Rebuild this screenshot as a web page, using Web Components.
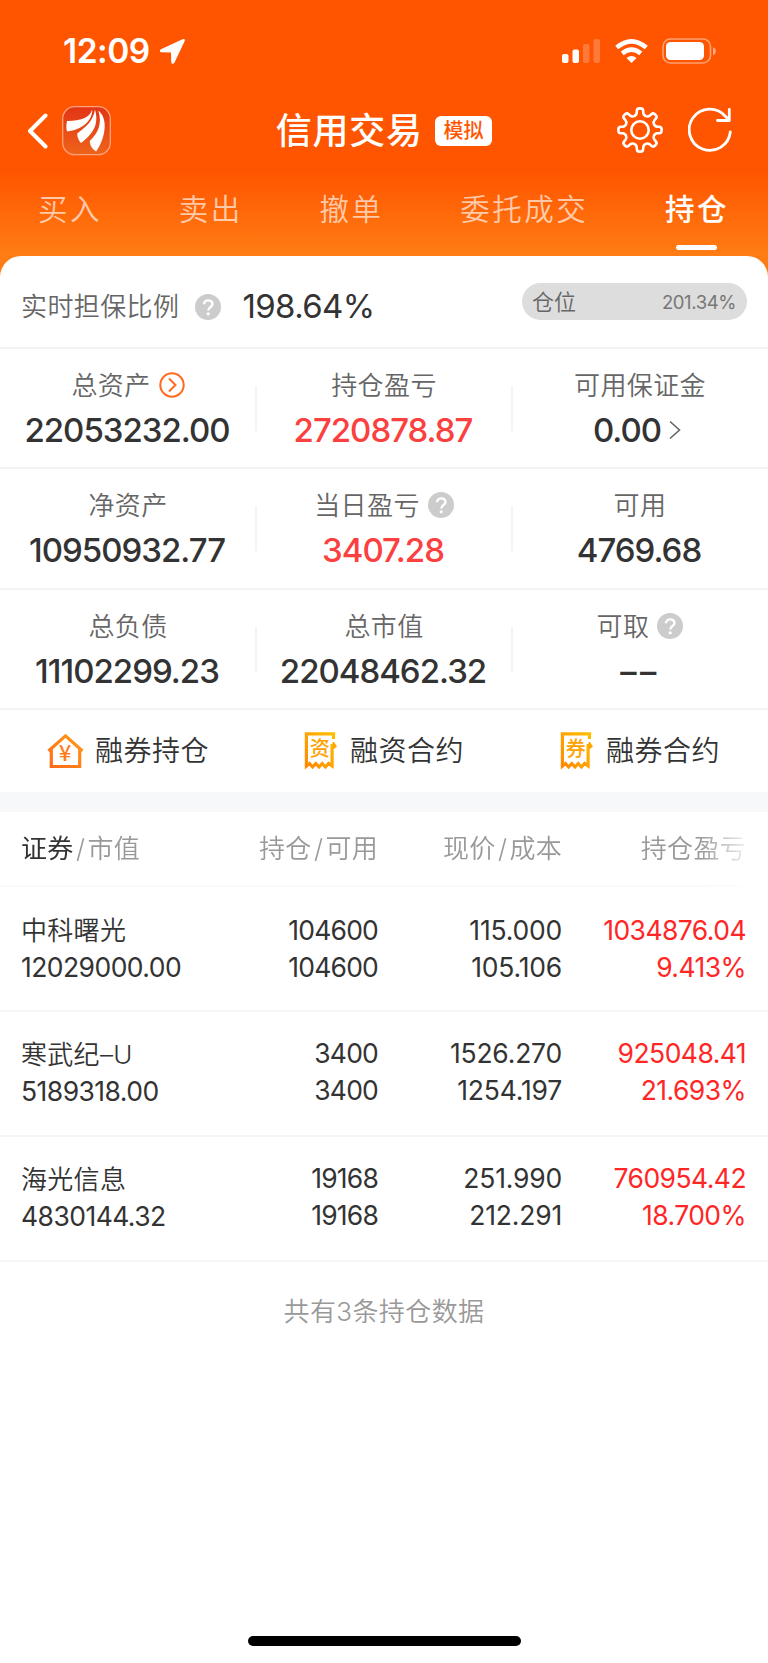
<!DOCTYPE html>
<html lang="zh-CN">
<head>
<meta charset="UTF-8">
<meta name="viewport" content="width=device-width, initial-scale=1.0">
<title>信用交易</title>
<style>
  body {
    margin: 0;
    background: #fff;
    color: #333;
    font-family: Inter, "Noto Sans CJK SC", sans-serif;
    font-weight: 350;
  }
</style>
</head>
<body>
<trade-app></trade-app>

<script>
const define = (name, html, setup) => {
  const template = document.createElement('template');
  template.innerHTML = html;
  customElements.define(name, class extends HTMLElement {
    constructor() {
      super();
      this.attachShadow({ mode: 'open' }).appendChild(template.content.cloneNode(true));
    }
    connectedCallback() {
      if (setup) setup(this, this.shadowRoot);
    }
  });
};

define('status-bar', `
  <style>
    :host { display: flex; align-items: center; height: 102px; padding: 0 51px 0 63px; box-sizing: border-box; color: #fff; }
    .time { font-size: 33.500px; font-weight: 600; letter-spacing: -.5px; line-height: 40px; }
    .arrow { margin-left: 9px; }
    .signal { margin-left: auto; }
    .wifi { margin-left: 14px; }
    .battery { margin-left: 14px; }
  </style>
  <span class="time">12:09</span>
  <svg class="arrow" width="27" height="27" viewBox="0 0 27 27" fill="#fff"><path d="M23.500 1.200 2 11.200c-1.800.9-1.400 3 .6 3.100l9.400.2.2 9.600c.1 2 2.300 2.400 3.200.6L25.700 3c.7-1.500-.4-2.500-2.200-1.800z"/></svg>
  <svg class="signal" width="39" height="25" viewBox="0 0 39 25" fill="#fff">
    <rect x="0" y="15" width="6.500" height="9" rx="2"/>
    <rect x="10.500" y="10.500" width="6.500" height="13.500" rx="2"/>
    <rect x="21" y="5" width="6.500" height="19" rx="2" opacity=".22"/>
    <rect x="31.500" y="0" width="6.500" height="24" rx="2" opacity=".22"/>
  </svg>
  <svg class="wifi" width="33" height="25" viewBox="0 0 33 25" fill="none" stroke="#fff" stroke-width="4.600">
    <path d="M1.700 8.600Q16.500-3.800 31.300 8.600"/>
    <path d="M7.200 14.400Q16.500 6.800 25.800 14.400"/>
    <path d="M16.500 24 11.500 19Q16.500 15 21.500 19Z" fill="#fff" stroke="none"/>
  </svg>
  <svg class="battery" width="55" height="26" viewBox="0 0 55 26">
    <rect x="1" y="1" width="47.500" height="24" rx="7.500" fill="none" stroke="#fff" stroke-width="1.600" opacity=".45"/>
    <rect x="4" y="4" width="38" height="18" rx="4.500" fill="#fff"/>
    <path d="M51 9.200c3.800 1.300 3.800 6.800 0 8z" fill="#fff" opacity=".5"/>
  </svg>
`);

define('gear-icon', `
  <style>:host { display: block; width: 46px; height: 46px; } svg { display: block; }</style>
  <svg width="46" height="46" viewBox="-23 -23 46 46" fill="none" stroke="#fff" stroke-width="2.600" stroke-linejoin="round">
    <path></path><circle r="8.700"/>
  </svg>
`, (host, root) => {
  // eight teeth, every corner rounded with a quadratic curve
  const points = [];
  for (let i = 0; i < 8; i++) {
    [[-13, 15.3], [-8, 21.8], [8, 21.8], [13, 15.3]].forEach(([offset, radius]) => {
      const angle = (i * 45 + offset) * Math.PI / 180;
      points.push([Math.cos(angle) * radius, Math.sin(angle) * radius]);
    });
  }
  const toward = (from, to, dist) => {
    const len = Math.hypot(to[0] - from[0], to[1] - from[1]);
    const t = Math.min(dist / len, 0.5);
    return [from[0] + (to[0] - from[0]) * t, from[1] + (to[1] - from[1]) * t].map(v => v.toFixed(2));
  };
  const d = points.map((point, i) => {
    const before = toward(point, points[(i + points.length - 1) % points.length], 2.4);
    const after = toward(point, points[(i + 1) % points.length], 2.4);
    return `${i ? 'L' : 'M'}${before}Q${point.map(v => v.toFixed(2))} ${after}`;
  });
  root.querySelector('path').setAttribute('d', d.join('') + 'Z');
});

define('nav-bar', `
  <style>
    :host { display: grid; grid-template-columns: 1fr auto 1fr; align-items: center; height: 57px; padding: 0 36px 0 27px; color: #fff; }
    .left, .right, .middle { display: flex; align-items: center; }
    .logo { margin-left: 14px; }
    .middle { gap: 12px; margin-left: 9px; }
    h1 { margin: 0; font-size: 36px; font-weight: 500; letter-spacing: .7px; line-height: 50px; }
    .badge { width: 57.500px; height: 30px; border-radius: 6px; background: #fff; color: #f50; font-size: 20px; font-weight: 500; line-height: 30px; text-align: center; }
    .right { justify-content: flex-end; gap: 25px; margin-top: -1px; }
    svg { display: block; }
  </style>
  <div class="left">
    <svg width="21" height="36" viewBox="0 0 21 36" fill="none" stroke="#fff" stroke-width="4" stroke-linecap="round" stroke-linejoin="round"><path d="M18.500 2.500 3 18l15.500 15.500"/></svg>
    <svg class="logo" width="49" height="50" viewBox="0 0 49 50">
      <defs><linearGradient id="g" x2="0" y2="1"><stop stop-color="#e33415"/><stop offset="1" stop-color="#ee641a"/></linearGradient></defs>
      <rect x=".7" y=".7" width="47.600" height="48" rx="12" fill="url(#g)" stroke="#ffa37a" stroke-width="1.300"/>
      <path fill="#fff" d="M30.200 3.600C30.700 14 21 24 5 25.500 4 22 4.200 18.500 5 15 17 15.200 27.500 12.500 30.200 3.600zM33 3.600c-.8 3.500-1.500 7-4.500 11.500-3 4.300-7.500 8-13.300 12.500 0 4 1.500 7 3.800 9.500C28 30 38 21 33 3.600zM36.300 4.500c4 13 .3 22-8.500 30.500 0 4.500 2.500 8 6.400 10.500C43 33 47 13 36.300 4.500z"/>
    </svg>
  </div>
  <div class="middle"><h1>信用交易</h1><span class="badge">模拟</span></div>
  <div class="right">
    <gear-icon></gear-icon>
    <svg width="44" height="46" viewBox="0 0 44 46" fill="none" stroke="#fff" stroke-width="2.800" stroke-linecap="round" stroke-linejoin="round"><path d="M42.300 25A20.600 20.600 0 1 1 37.600 9.500L41.300 13.300M41.300 2.500V13.500H29.500"/></svg>
  </div>
`);

define('nav-tab', `
  <style>
    :host { display: flex; flex-direction: column; align-items: center; height: 91px; box-sizing: border-box; padding-top: 28px; font-size: 29.500px; letter-spacing: 2.500px; line-height: 44px; color: rgba(255, 255, 255, .66); }
    i { width: 41px; height: 5px; margin: 14px 1px 0 0; border-radius: 3px; }
    :host([active]) { color: #fff; font-weight: 500; }
    :host([active]) i { background: #fff; }
  </style>
  <slot></slot><i></i>
`);

define('nav-tabs', `
  <style>:host { display: flex; justify-content: space-between; height: 97px; padding: 0 39px 0 38px; }</style>
  <slot></slot>
`);

define('help-icon', `
  <style>:host { display: block; width: 26px; height: 26px; border-radius: 50%; background: #ccc; } svg { display: block; }</style>
  <svg width="26" height="26" viewBox="0 0 26 26" fill="none" stroke="#fff" stroke-width="2.400"><path d="M9 10.300c0-5.200 8.500-5.200 8.500-.3 0 3-4.200 3-4.200 6.600"/><circle cx="13.200" cy="19.800" r="1.600" fill="#fff" stroke="none"/></svg>
`);

define('ratio-row', `
  <style>
    :host { display: flex; align-items: center; height: 93px; padding: 0 21px; box-sizing: border-box; border-bottom: 2px solid #f2f3f5; }
    .label { margin-top: 11px; font-size: 26px; letter-spacing: .4px; color: #666; line-height: 36px; }
    help-icon { margin: 10px 0 0 16px; }
    .value { margin: 9px 0 0 21px; font-size: 33px; font-weight: 400; letter-spacing: -.6px; line-height: 40px; }
    .pill { display: flex; align-items: center; justify-content: space-between; width: 225px; height: 37px; margin: 0 0 0 auto; padding: 0 11px 0 10px; box-sizing: border-box; border-radius: 19px; background: #ddd; color: #666; font-size: 22px; line-height: 30px; }
    .pill b { font-size: 18.500px; font-weight: 400; letter-spacing: -.4px; color: #777; }
  </style>
  <span class="label">实时担保比例</span>
  <help-icon></help-icon>
  <span class="value">198.64%</span>
  <div class="pill"><span>仓位</span><b>201.34%</b></div>
`);

define('metric-cell', `
  <style>
    :host { position: relative; display: flex; flex-direction: column; align-items: center; height: 120.300px; box-sizing: border-box; padding-top: 19px; border-bottom: 2px solid #f2f3f5; }
    :host([divider])::after { content: ""; position: absolute; right: -1px; top: 37px; width: 2px; height: 45px; background: #f2f3f5; }
    .label { display: flex; align-items: center; gap: 8px; height: 36px; font-size: 26px; letter-spacing: .4px; line-height: 36px; color: #666; }
    .value { display: flex; align-items: center; gap: 8px; height: 44px; margin-top: 4px; padding-right: 2px; font-size: 33px; font-weight: 500; letter-spacing: -1px; line-height: 44px; color: #333; }
    :host([up]) .value { color: #fb4040; }
  </style>
  <div class="label"><slot name="label"></slot></div>
  <div class="value"><slot></slot></div>
`);

define('metric-grid', `
  <style>
    :host { display: grid; grid-template-columns: repeat(3, 1fr); }
    svg { display: block; }
    [slot="label"]:not(span) { margin-bottom: 2px; }
    .more { margin-right: 4px; }
    .empty { font-family: "Liberation Sans", sans-serif; font-size: 33px; font-weight: 700; letter-spacing: 1.500px; }
  </style>
  <metric-cell divider><span slot="label">总资产</span>
    <svg slot="label" width="26" height="26" viewBox="0 0 26 26" fill="none" stroke="#ff6a1f" stroke-width="2"><circle cx="13" cy="13" r="11.700"/><path d="m10 6.500 6.500 6.500-6.500 6.500"/></svg>22053232.00</metric-cell>
  <metric-cell divider up><span slot="label">持仓盈亏</span>2720878.87</metric-cell>
  <metric-cell><span slot="label">可用保证金</span>0.00<svg class="more" width="12" height="20" viewBox="0 0 12 20" fill="none" stroke="#666" stroke-width="1.600"><path d="m1 1.500 9.500 8.500L1 18.500"/></svg></metric-cell>
  <metric-cell divider><span slot="label">净资产</span>10950932.77</metric-cell>
  <metric-cell divider up><span slot="label">当日盈亏</span><help-icon slot="label"></help-icon>3407.28</metric-cell>
  <metric-cell><span slot="label">可用</span>4769.68</metric-cell>
  <metric-cell divider><span slot="label">总负债</span>11102299.23</metric-cell>
  <metric-cell divider><span slot="label">总市值</span>22048462.32</metric-cell>
  <metric-cell><span slot="label">可取</span><help-icon slot="label"></help-icon><span class="empty">––</span></metric-cell>
`);

define('receipt-icon', `
  <style>
    :host { display: block; width: 33px; height: 38px; }
    svg { display: block; overflow: visible; }
    text { font: 500 20px "Noto Sans CJK SC", sans-serif; }
  </style>
  <svg width="33" height="38" viewBox="0 0 33 38">
    <defs><linearGradient id="g" x1="0" y1="1" x2="1" y2="0"><stop stop-color="#ff8a00"/><stop offset="1" stop-color="#ffbe00"/></linearGradient></defs>
    <path fill="none" stroke="url(#g)" stroke-width="3.200" d="M29.500 7V1.800H2.400V34l3-2.500 3.200 3.500 3.200-3.500 3.200 3.500 3.200-3.500 3.200 3.500 3.200-3.500 3.500 2.500V12"/>
    <path fill="#ffa800" d="M28.500 10h1.500l3 4.500-3 2.500h-1.500z"/>
    <text x="16" y="24" text-anchor="middle" fill="#ffa200"></text>
  </svg>
`, (host, root) => {
  root.querySelector('text').textContent = host.getAttribute('char');
});

define('house-icon', `
  <style>
    :host { display: block; width: 37px; height: 38px; margin-right: -2px; }
    svg { display: block; }
    text { font: 500 22px "Noto Sans CJK SC", sans-serif; }
  </style>
  <svg width="37" height="38" viewBox="0 0 37 38">
    <defs><linearGradient id="g" x1="0" y1="1" x2="1" y2="0"><stop stop-color="#ff6a1a"/><stop offset="1" stop-color="#ff9c1a"/></linearGradient></defs>
    <path fill="none" stroke="url(#g)" stroke-width="3.200" d="M1.500 19 18.500 3.800 35.500 19M4.300 17.500V34.500H32.700V17.500"/>
    <text x="18.300" y="28.500" text-anchor="middle" fill="#ff7d1a">¥</text>
  </svg>
`);

define('shortcut-link', `
  <style>
    :host { display: flex; align-items: center; justify-content: center; gap: 13px; font-size: 28px; letter-spacing: .5px; line-height: 40px; color: #333; }
  </style>
  <slot name="icon"></slot><slot></slot>
`);

define('shortcut-bar', `
  <style>:host { display: grid; grid-template-columns: repeat(3, 1fr); height: 82px; border-bottom: 20px solid #f6f8fa; }</style>
  <shortcut-link><house-icon slot="icon"></house-icon>融券持仓</shortcut-link>
  <shortcut-link><receipt-icon slot="icon" char="资"></receipt-icon>融资合约</shortcut-link>
  <shortcut-link><receipt-icon slot="icon" char="券"></receipt-icon>融券合约</shortcut-link>
`);

define('position-head', `
  <style>
    :host { display: grid; grid-template-columns: 194px 163px 184px 184px; height: 75px; padding-left: 21px; box-sizing: border-box; border-bottom: 2px solid #f8f9fa; font-size: 26px; letter-spacing: .3px; line-height: 73px; color: #999; white-space: nowrap;
      -webkit-mask-image: linear-gradient(to right, #000 700px, transparent 755px); mask-image: linear-gradient(to right, #000 700px, transparent 755px); }
    span { text-align: right; }
    .first { text-align: left; }
    b { font-weight: 400; color: #333; }
    i { font-style: normal; padding: 0 2px 0 2.500px; }
  </style>
  <span class="first"><b>证券</b><i>/</i>市值</span>
  <span>持仓<i>/</i>可用</span>
  <span>现价<i>/</i>成本</span>
  <span>持仓盈亏</span>
`);

define('position-row', `
  <style>
    :host { display: grid; grid-template-columns: 194px 163px 184px 184px; height: 125px; padding: 25px 0 0 21px; box-sizing: border-box; border-bottom: 2px solid #f5f6f7; font-size: 26.500px; font-weight: 400; letter-spacing: -.55px; line-height: 37px; color: #333; }
    :host(:not(:first-of-type)) { padding-top: 24px; }
    :host(:not(:first-of-type)) div:not(.stock) { margin-top: -1px; }
    div { text-align: right; white-space: nowrap; }
    span { display: block; height: 37.300px; }
    .stock { text-align: left; }
    .name { font-size: 26px; font-weight: 350; letter-spacing: .3px; }
    .amount { letter-spacing: -.8px; }
    .price { letter-spacing: -.2px; }
    .up { color: #ff2626; }
  </style>
  <div class="stock"><span class="name" data-key="name"></span><span data-key="value"></span></div>
  <div class="amount"><span data-key="held"></span><span data-key="available"></span></div>
  <div class="price"><span data-key="price"></span><span data-key="cost"></span></div>
  <div class="up"><span data-key="profit"></span><span data-key="rate"></span></div>
`, (host, root) => {
  root.querySelectorAll('[data-key]').forEach(cell => {
    cell.textContent = host.getAttribute(cell.dataset.key);
  });
});

define('position-list', `
  <style>
    :host { display: block; }
    p { margin: 0; padding-top: 31px; text-align: center; font-size: 26px; letter-spacing: .4px; line-height: 38px; color: #999; }
  </style>
  <position-head></position-head>
  <position-row name="中科曙光" value="12029000.00" held="104600" available="104600" price="115.000" cost="105.106" profit="1034876.04" rate="9.413%"></position-row>
  <position-row name="寒武纪–U" value="5189318.00" held="3400" available="3400" price="1526.270" cost="1254.197" profit="925048.41" rate="21.693%"></position-row>
  <position-row name="海光信息" value="4830144.32" held="19168" available="19168" price="251.990" cost="212.291" profit="760954.42" rate="18.700%"></position-row>
  <p>共有3条持仓数据</p>
`);

define('trade-app', `
  <style>
    :host { display: flex; flex-direction: column; height: 1663px; overflow: hidden; background: linear-gradient(#f50 172px, #ff7d14 256px, #ff7d14 300px, #fff 300px); }
    main { flex: 1; display: flex; flex-direction: column; border-radius: 21px 21px 0 0; background: #fff; }
    .home { width: 273px; height: 10px; margin: auto auto 17px; border-radius: 5px; background: #000; }
  </style>
  <status-bar></status-bar>
  <nav-bar></nav-bar>
  <nav-tabs>
    <nav-tab>买入</nav-tab>
    <nav-tab>卖出</nav-tab>
    <nav-tab>撤单</nav-tab>
    <nav-tab>委托成交</nav-tab>
    <nav-tab active>持仓</nav-tab>
  </nav-tabs>
  <main>
    <ratio-row></ratio-row>
    <metric-grid></metric-grid>
    <shortcut-bar></shortcut-bar>
    <position-list></position-list>
    <div class="home"></div>
  </main>
`);
</script>
</body>
</html>
